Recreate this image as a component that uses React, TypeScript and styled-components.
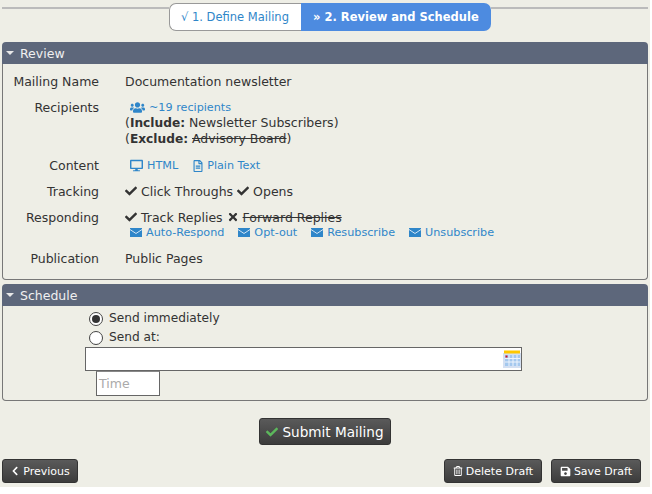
import * as React from "react";
import styled, { createGlobalStyle } from "styled-components";
import {
  FaCheck,
  FaChevronLeft,
  FaDesktop,
  FaRegFileAlt,
  FaRegTrashAlt,
  FaSave,
  FaTimes,
  FaUsers,
} from "react-icons/fa";

const GlobalStyle = createGlobalStyle`
  html, body {
    margin: 0;
    padding: 0;
    background: #fff;
  }
  body {
    font-family: "DejaVu Sans", Verdana, sans-serif;
    font-size: 12.5px;
    line-height: 15px;
    color: #333;
  }
`;

const Page = styled("div")`
  width: 650px;
  height: 487px;
  box-sizing: border-box;
  padding: 3px 2px 0;
  background: #eeeee6;
  overflow: hidden;
`;

const Wizard = styled("div")`
  display: flex;
  align-items: flex-start;
  height: 28px;
  margin-bottom: 11px;
`;

const WizardLine = styled("div")<{ $width?: number }>`
  flex: ${(p) => (p.$width ? `0 0 ${p.$width}px` : "1")};
  height: 2px;
  margin-top: 4px;
  background: #bbb;
`;

const DoneStep = styled("a")`
  display: flex;
  align-items: center;
  box-sizing: border-box;
  width: 132px;
  height: 28px;
  padding-left: 11px;
  background: #fff;
  border: 1px solid #999;
  border-right: 0;
  border-radius: 7px 0 0 7px;
  color: #2f86c9;
  font-size: 11.5px;
  white-space: nowrap;
`;

const CurrentStep = styled("a")`
  display: flex;
  align-items: center;
  box-sizing: border-box;
  width: 190px;
  height: 28px;
  padding-left: 12px;
  background: #4d8be0;
  border-radius: 0 7px 7px 0;
  color: #fff;
  font-size: 11.5px;
  font-weight: bold;
  white-space: nowrap;
`;

const Panel = styled("section")`
  margin-bottom: 4px;
`;

const PanelHeader = styled("h2")`
  display: flex;
  align-items: center;
  gap: 6px;
  height: 22px;
  margin: 0;
  padding-left: 4px;
  background: #5d677b;
  border-radius: 4px 4px 0 0;
  color: #f0f0f0;
  font-size: 12.5px;
  font-weight: normal;
`;

const Caret = styled("span")`
  width: 0;
  height: 0;
  border-left: 4px solid transparent;
  border-right: 4px solid transparent;
  border-top: 4px solid #e8e8e8;
`;

const PanelBody = styled("div")<{ $height: number }>`
  box-sizing: border-box;
  height: ${(p) => p.$height}px;
  border: 1px solid #777;
  border-top: 0;
  border-radius: 0 0 4px 4px;
`;

const ReviewList = styled("div")`
  padding-top: 10px;
`;

const Row = styled("div")`
  display: grid;
  grid-template-columns: 96px 1fr;
  column-gap: 26px;
  padding-bottom: 11px;
`;

const Label = styled("div")`
  text-align: right;
`;

const Value = styled("div")`
  white-space: nowrap;

  b {
    font-size: 12.2px;
  }
`;

const LinkLine = styled("div")`
  display: flex;
  align-items: center;
  height: 15px;
  padding-left: 5px;
  font-size: 11.2px;
`;

const Link = styled("a")<{ $gap?: number; $iconGap?: number }>`
  display: inline-flex;
  align-items: center;
  gap: ${(p) => p.$iconGap ?? 4}px;
  margin-right: ${(p) => p.$gap ?? 14}px;
  color: #2f86c9;
`;

const Struck = styled("span")`
  text-decoration: line-through;
`;

const InlineIcon = styled("span")`
  display: inline-flex;
  vertical-align: -1px;
  margin-right: 4px;
  font-size: 12px;
  color: #333;
`;

const ScheduleForm = styled("div")`
  padding-top: 3px;
  padding-left: 82px;
`;

const RadioRow = styled("label")`
  display: flex;
  align-items: center;
  gap: 6px;
  height: 19px;
  padding-left: 4px;
  font-size: 12.2px;
`;

const Radio = styled("span")<{ $checked?: boolean }>`
  display: flex;
  align-items: center;
  justify-content: center;
  box-sizing: border-box;
  width: 14px;
  height: 14px;
  background: #fff;
  border: 1px solid #444;
  border-radius: 50%;

  &::after {
    content: "";
    display: ${(p) => (p.$checked ? "block" : "none")};
    width: 8px;
    height: 8px;
    border-radius: 50%;
    background: #333;
  }
`;

const DateField = styled("div")`
  display: flex;
  align-items: center;
  justify-content: flex-end;
  box-sizing: border-box;
  width: 437px;
  height: 24px;
  background: #fff;
  border: 1px solid #666;
`;

const TimeField = styled("div")`
  box-sizing: border-box;
  width: 64px;
  height: 25px;
  margin-left: 11px;
  padding: 4px 2px;
  background: #fff;
  border: 1px solid #666;
  border-top-color: #888;
  color: #aaa;
`;

const SubmitRow = styled("div")`
  display: flex;
  justify-content: center;
  padding-top: 13px;
  padding-bottom: 14px;
`;

const Button = styled("button")<{ $big?: boolean; $width: number }>`
  display: inline-flex;
  align-items: center;
  justify-content: center;
  gap: ${(p) => (p.$big ? 4 : 3)}px;
  box-sizing: border-box;
  width: ${(p) => p.$width}px;
  height: ${(p) => (p.$big ? 27 : 24)}px;
  padding: 0;
  background: linear-gradient(#5a5a5a, #3c3c3c);
  border: 1px solid #333;
  border-radius: 3px;
  color: #fff;
  font-family: inherit;
  font-size: ${(p) => (p.$big ? 13.6 : 11)}px;
  white-space: nowrap;
`;

const Footer = styled("div")`
  display: flex;
  gap: 9px;
  padding-right: 7px;
`;

const Spacer = styled("div")`
  flex: 1;
`;

const CalendarIcon = () => (
  <svg width="18" height="18" viewBox="0 0 18 18">
    <rect x="0" y="3" width="18" height="15" fill="#d4e0f2" />
    <rect x="1" y="0.5" width="16" height="3" fill="#ffc800" />
    <rect x="2" y="5" width="15" height="11" fill="#a4c8ee" />
    <path d="M2 8.5H17M2 12H17M6 5V16M10 5V16M14 5V16" stroke="#eef4fc" strokeWidth="1" />
    <rect x="2.5" y="5.5" width="2" height="2" fill="#d0102a" />
  </svg>
);

const EnvelopeIcon = () => (
  <svg width="12" height="9" viewBox="0 0 12 9">
    <rect width="12" height="9" fill="#2f86c9" />
    <path d="M0 1.5L6 5.5L12 1.5" fill="none" stroke="#cfe3f4" strokeWidth="1" />
  </svg>
);

const MailLink = ({ children, gap }: { children: React.ReactNode; gap?: number }) => (
  <Link $gap={gap}>
    <EnvelopeIcon />
    {children}
  </Link>
);

const App = (): JSX.Element => {
  return (
    <>
      <GlobalStyle />
      <Page>
        <Wizard>
          <WizardLine $width={167} />
          <DoneStep>√ 1. Define Mailing</DoneStep>
          <CurrentStep>» 2. Review and Schedule</CurrentStep>
          <WizardLine />
        </Wizard>

        <Panel>
          <PanelHeader>
            <Caret />
            Review
          </PanelHeader>
          <PanelBody $height={216}>
            <ReviewList>
              <Row>
                <Label>Mailing Name</Label>
                <Value>Documentation newsletter</Value>
              </Row>
              <Row>
                <Label>Recipients</Label>
                <Value>
                  <LinkLine>
                    <Link>
                      <FaUsers size={15} />
                      ~19 recipients
                    </Link>
                  </LinkLine>
                  <div>
                    (<b>Include:</b> Newsletter Subscribers)
                  </div>
                  <div>
                    (<b>Exclude:</b> <Struck>Advisory Board</Struck>)
                  </div>
                </Value>
              </Row>
              <Row>
                <Label>Content</Label>
                <Value>
                  <LinkLine>
                    <Link>
                      <FaDesktop size={13} />
                      HTML
                    </Link>
                    <Link $iconGap={3}>
                      <FaRegFileAlt size={12} />
                      Plain Text
                    </Link>
                  </LinkLine>
                </Value>
              </Row>
              <Row>
                <Label>Tracking</Label>
                <Value>
                  <InlineIcon>
                    <FaCheck />
                  </InlineIcon>
                  Click Throughs{" "}
                  <InlineIcon>
                    <FaCheck />
                  </InlineIcon>
                  Opens
                </Value>
              </Row>
              <Row>
                <Label>Responding</Label>
                <Value>
                  <InlineIcon>
                    <FaCheck />
                  </InlineIcon>
                  Track Replies{" "}
                  <InlineIcon>
                    <FaTimes />
                  </InlineIcon>
                  <Struck>Forward Replies</Struck>
                  <LinkLine>
                    <MailLink>Auto-Respond</MailLink>
                    <MailLink>Opt-out</MailLink>
                    <MailLink>Resubscribe</MailLink>
                    <MailLink>Unsubscribe</MailLink>
                  </LinkLine>
                </Value>
              </Row>
              <Row>
                <Label>Publication</Label>
                <Value>Public Pages</Value>
              </Row>
            </ReviewList>
          </PanelBody>
        </Panel>

        <Panel>
          <PanelHeader>
            <Caret />
            Schedule
          </PanelHeader>
          <PanelBody $height={95}>
            <ScheduleForm>
              <RadioRow>
                <Radio $checked />
                Send immediately
              </RadioRow>
              <RadioRow>
                <Radio />
                Send at:
              </RadioRow>
              <DateField>
                <CalendarIcon />
              </DateField>
              <TimeField>Time</TimeField>
            </ScheduleForm>
          </PanelBody>
        </Panel>

        <SubmitRow>
          <Button $big $width={132}>
            <FaCheck color="#5cb85c" size={12} />
            Submit Mailing
          </Button>
        </SubmitRow>

        <Footer>
          <Button $width={76}>
            <FaChevronLeft size={10} />
            Previous
          </Button>
          <Spacer />
          <Button $width={98}>
            <FaRegTrashAlt size={10} />
            Delete Draft
          </Button>
          <Button $width={90}>
            <FaSave size={11} />
            Save Draft
          </Button>
        </Footer>
      </Page>
    </>
  );
};

export default App;
